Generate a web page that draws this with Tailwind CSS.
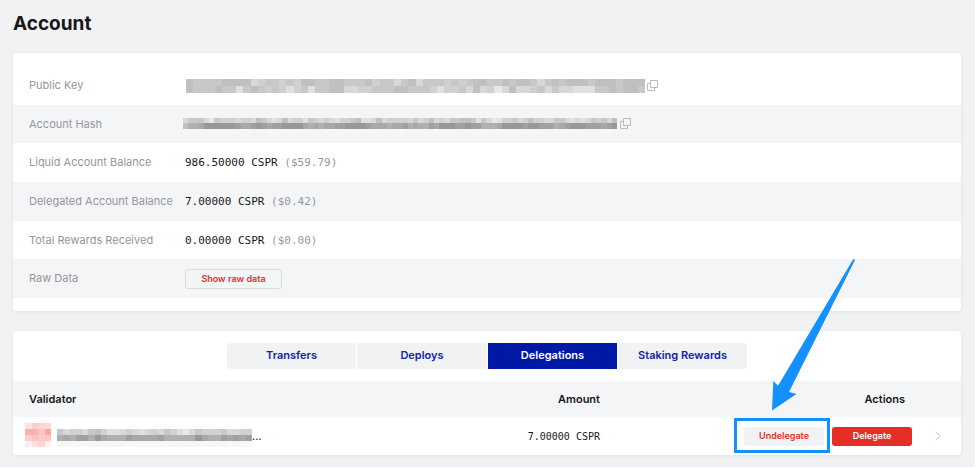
<!DOCTYPE html>
<html lang="en">
<head>
<meta charset="utf-8">
<meta name="viewport" content="width=device-width, initial-scale=1">
<title>Account</title>
<script src="https://cdn.jsdelivr.net/npm/@tailwindcss/browser@4"></script>
</head>
<body class="bg-white font-['Inter',sans-serif] text-[#181818]">
<main class="mr-0.5 mb-px bg-[#f0f2f4] pt-2.5 pr-3.5 pb-3 pl-[13px]">
  <h1 class="text-[19px] leading-[27px] font-bold">Account</h1>

  <section class="mt-4 rounded bg-white py-[13px] shadow-[0_1px_4px_rgba(0,0,0,0.07)]">
    <dl class="grid min-h-[232px] auto-rows-fr text-[11px]">
      <div class="flex items-center px-4">
        <dt class="w-[156px] shrink-0 text-[#94979b]">Public Key</dt>
        <dd class="flex items-center gap-0.5 pl-px">
          <svg class="mt-px h-[14px] w-[459px]" viewBox="0 0 64 2" preserveAspectRatio="none" shape-rendering="crispEdges" role="img" aria-label="Hidden public key" data-mosaic></svg>
          <button type="button" aria-label="Copy public key"><svg class="block size-[11px]" viewBox="0 0 11 11" fill="none" stroke="#b9bbbd"><path d="M3.5.5h7v7h-7zM3 3.5H.5v7h7V8"/></svg></button>
        </dd>
      </div>
      <div class="flex items-center bg-[#f4f5f7] px-4">
        <dt class="w-[154px] shrink-0 text-[#94979b]">Account Hash</dt>
        <dd class="flex items-center gap-[3px]">
          <svg class="mt-1 h-4 w-[434px]" viewBox="0 0 83 3" preserveAspectRatio="none" shape-rendering="crispEdges" role="img" aria-label="Hidden account hash" data-mosaic></svg>
          <button type="button" aria-label="Copy account hash"><svg class="block size-[11px]" viewBox="0 0 11 11" fill="none" stroke="#b9bbbd"><path d="M3.5.5h7v7h-7zM3 3.5H.5v7h7V8"/></svg></button>
        </dd>
      </div>
      <div class="flex items-center px-4">
        <dt class="w-[156px] shrink-0 text-[#94979b]">Liquid Account Balance</dt>
        <dd class="pt-0.5 font-['DejaVu_Sans_Mono',monospace]">986.50000 CSPR <span class="text-[#94979b]">($59.79)</span></dd>
      </div>
      <div class="flex items-center bg-[#f4f5f7] px-4">
        <dt class="w-[156px] shrink-0 text-[#94979b]">Delegated Account Balance</dt>
        <dd class="pt-0.5 font-['DejaVu_Sans_Mono',monospace]">7.00000 CSPR <span class="text-[#94979b]">($0.42)</span></dd>
      </div>
      <div class="flex items-center px-4">
        <dt class="w-[156px] shrink-0 text-[#94979b]">Total Rewards Received</dt>
        <dd class="pt-0.5 font-['DejaVu_Sans_Mono',monospace]">0.00000 CSPR <span class="text-[#94979b]">($0.00)</span></dd>
      </div>
      <div class="flex items-center bg-[#f4f5f7] px-4">
        <dt class="w-[156px] shrink-0 text-[#94979b]">Raw Data</dt>
        <dd><button type="button" class="block h-5 w-[97px] rounded-[3px] border border-[#d9dbde] text-[9px] font-semibold text-[#ea2f28]">Show raw data</button></dd>
      </div>
    </dl>
  </section>

  <section class="mt-5 rounded bg-white pt-3 shadow-[0_1px_4px_rgba(0,0,0,0.07)]">
    <nav class="flex justify-center gap-px text-[11px] font-semibold text-[#0e24a6]" aria-label="Account activity">
      <button type="button" class="h-[26px] w-[129px] rounded-l-[3px] bg-[#f1f2f4] pb-0.5">Transfers</button>
      <button type="button" class="h-[26px] w-[130px] bg-[#f1f2f4] pb-0.5">Deploys</button>
      <button type="button" class="h-[26px] w-[129px] bg-[#0018a6] pb-0.5 text-white" aria-current="page">Delegations</button>
      <button type="button" class="h-[26px] w-[129px] rounded-r-[3px] bg-[#f1f2f4] pb-0.5">Staking Rewards</button>
    </nav>
    <table class="mt-3 w-full table-fixed text-[11px]">
      <thead>
        <tr class="h-9 bg-[#f4f5f7]">
          <th scope="col" class="pl-4 text-left font-semibold">Validator</th>
          <th scope="col" class="w-[330px] text-right font-semibold">Amount</th>
          <th scope="col" class="w-[312px] pr-[7px] text-right font-semibold">Actions</th>
          <th scope="col" class="w-[49px]" aria-label="Details"></th>
        </tr>
      </thead>
      <tbody>
        <tr class="h-[38px]">
          <td class="pl-3">
            <div class="flex items-center">
              <svg class="mb-0.5 h-6 w-[26px] shrink-0" viewBox="0 0 4 4" preserveAspectRatio="none" shape-rendering="crispEdges" role="img" aria-label="Validator logo">
                <path fill="#fde2e2" d="M0 0h1v1H0z"/><path fill="#fbcfcf" d="M1 0h1v1H1z"/><path fill="#fcd6d6" d="M2 0h1v1H2z"/><path fill="#fcd9d9" d="M3 0h1v1H3z"/>
                <path fill="#fbb2b2" d="M0 1h2v1H0z"/><path fill="#fbc4c4" d="M2 1h1v1H2z"/><path fill="#fba3a3" d="M3 1h1v1H3z"/>
                <path fill="#fcd1d1" d="M0 2h1v1H0z"/><path fill="#fbc2c2" d="M1 2h1v1H1z"/><path fill="#fbcaca" d="M2 2h1v1H2z"/><path fill="#fbc5c5" d="M3 2h1v1H3z"/>
                <path fill="#feeeee" d="M0 3h1v1H0z"/><path fill="#fddddd" d="M1 3h1v1H1z"/><path fill="#fcd4d4" d="M2 3h1v1H2z"/><path fill="#fef0f0" d="M3 3h1v1H3z"/>
              </svg>
              <svg class="mt-1 ml-1.5 h-[18px] w-[195px] shrink-0" viewBox="0 0 31 3" preserveAspectRatio="none" shape-rendering="crispEdges" role="img" aria-label="Hidden validator name" data-mosaic></svg>
              <span>...</span>
            </div>
          </td>
          <td class="text-right font-['DejaVu_Sans_Mono',monospace] text-[10px]">7.00000 CSPR</td>
          <td>
            <div class="flex justify-end gap-2 text-[9px] font-semibold">
              <div class="relative">
                <button type="button" class="block h-[19px] w-20 rounded-[3px] bg-[#f1f2f4] text-[#ea2f28]">Undelegate</button>
                <span class="pointer-events-none absolute -top-[9px] -right-1.5 -bottom-[7px] -left-2.5 border-[3px] border-[#1490ff]"></span>
                <svg class="pointer-events-none absolute bottom-[35px] left-[27px] h-[152px] w-[84px]" viewBox="0 0 84 152" fill="#1490ff" aria-hidden="true"><path d="M1 151.500 2.300 122 7 126.700 82 .500Q84.500-.500 83.500 2L18 133 25.500 135z"/></svg>
              </div>
              <button type="button" class="h-[19px] w-20 rounded-[3px] bg-[#e62e25] text-white">Delegate</button>
            </div>
          </td>
          <td><a href="#" class="ml-[22px] block w-2" aria-label="View delegation"><svg class="block h-[10px] w-2" viewBox="0 0 8 10" fill="none" stroke="#c3c5c8"><path d="m1.500.8 4.700 4.200-4.700 4.200"/></svg></a></td>
        </tr>
      </tbody>
    </table>
  </section>
</main>
<script>
// Each hex digit is one mosaic cell: 0 is mid grey, f is nearly white.
// The third row of a mosaic uses a narrower, lighter range.
const mosaics = [
  ["899998888ba99a9a8899889998a99b98b999a9a9889989889b98988898889888",
   "8999899c989a9aca9c9988bbaa99988999acaa9b8badb8bba9b9bbccc9989889"],
  ["b999bd9aaabaab89bcb8baac9ababcaa98ccb8baaaab9ba8bab99889c9bdcaa9ba8aabb99bcbcb9a9b8",
   "86653333334554345443333565655443333455565546566453334434466653333433444654333444543",
   "feefddeeffeeedeefeeeefeeeddeeeffeedeeeeeefeeedeefeeeedeeffeeedeeeefeedeeefeeeedeefe"],
  ["9baab98accbabcbab9acdb9aaa9bbaa",
   "6564463566645555466666356645454",
   "feeffeefeeeffeeefeefeeffeeefeef"]
];
document.querySelectorAll("svg[data-mosaic]").forEach((svg, i) => {
  mosaics[i].forEach((row, y) => [...row].forEach((digit, x) => {
    const level = y === 2 ? 232 + parseInt(digit, 16) : 128 + 8 * parseInt(digit, 16);
    const cell = document.createElementNS("http://www.w3.org/2000/svg", "rect");
    const attrs = { x, y, width: 1, height: 1, fill: `rgb(${level} ${level} ${level})` };
    for (const name in attrs) cell.setAttribute(name, attrs[name]);
    svg.append(cell);
  }));
});
</script>
</body>
</html>
